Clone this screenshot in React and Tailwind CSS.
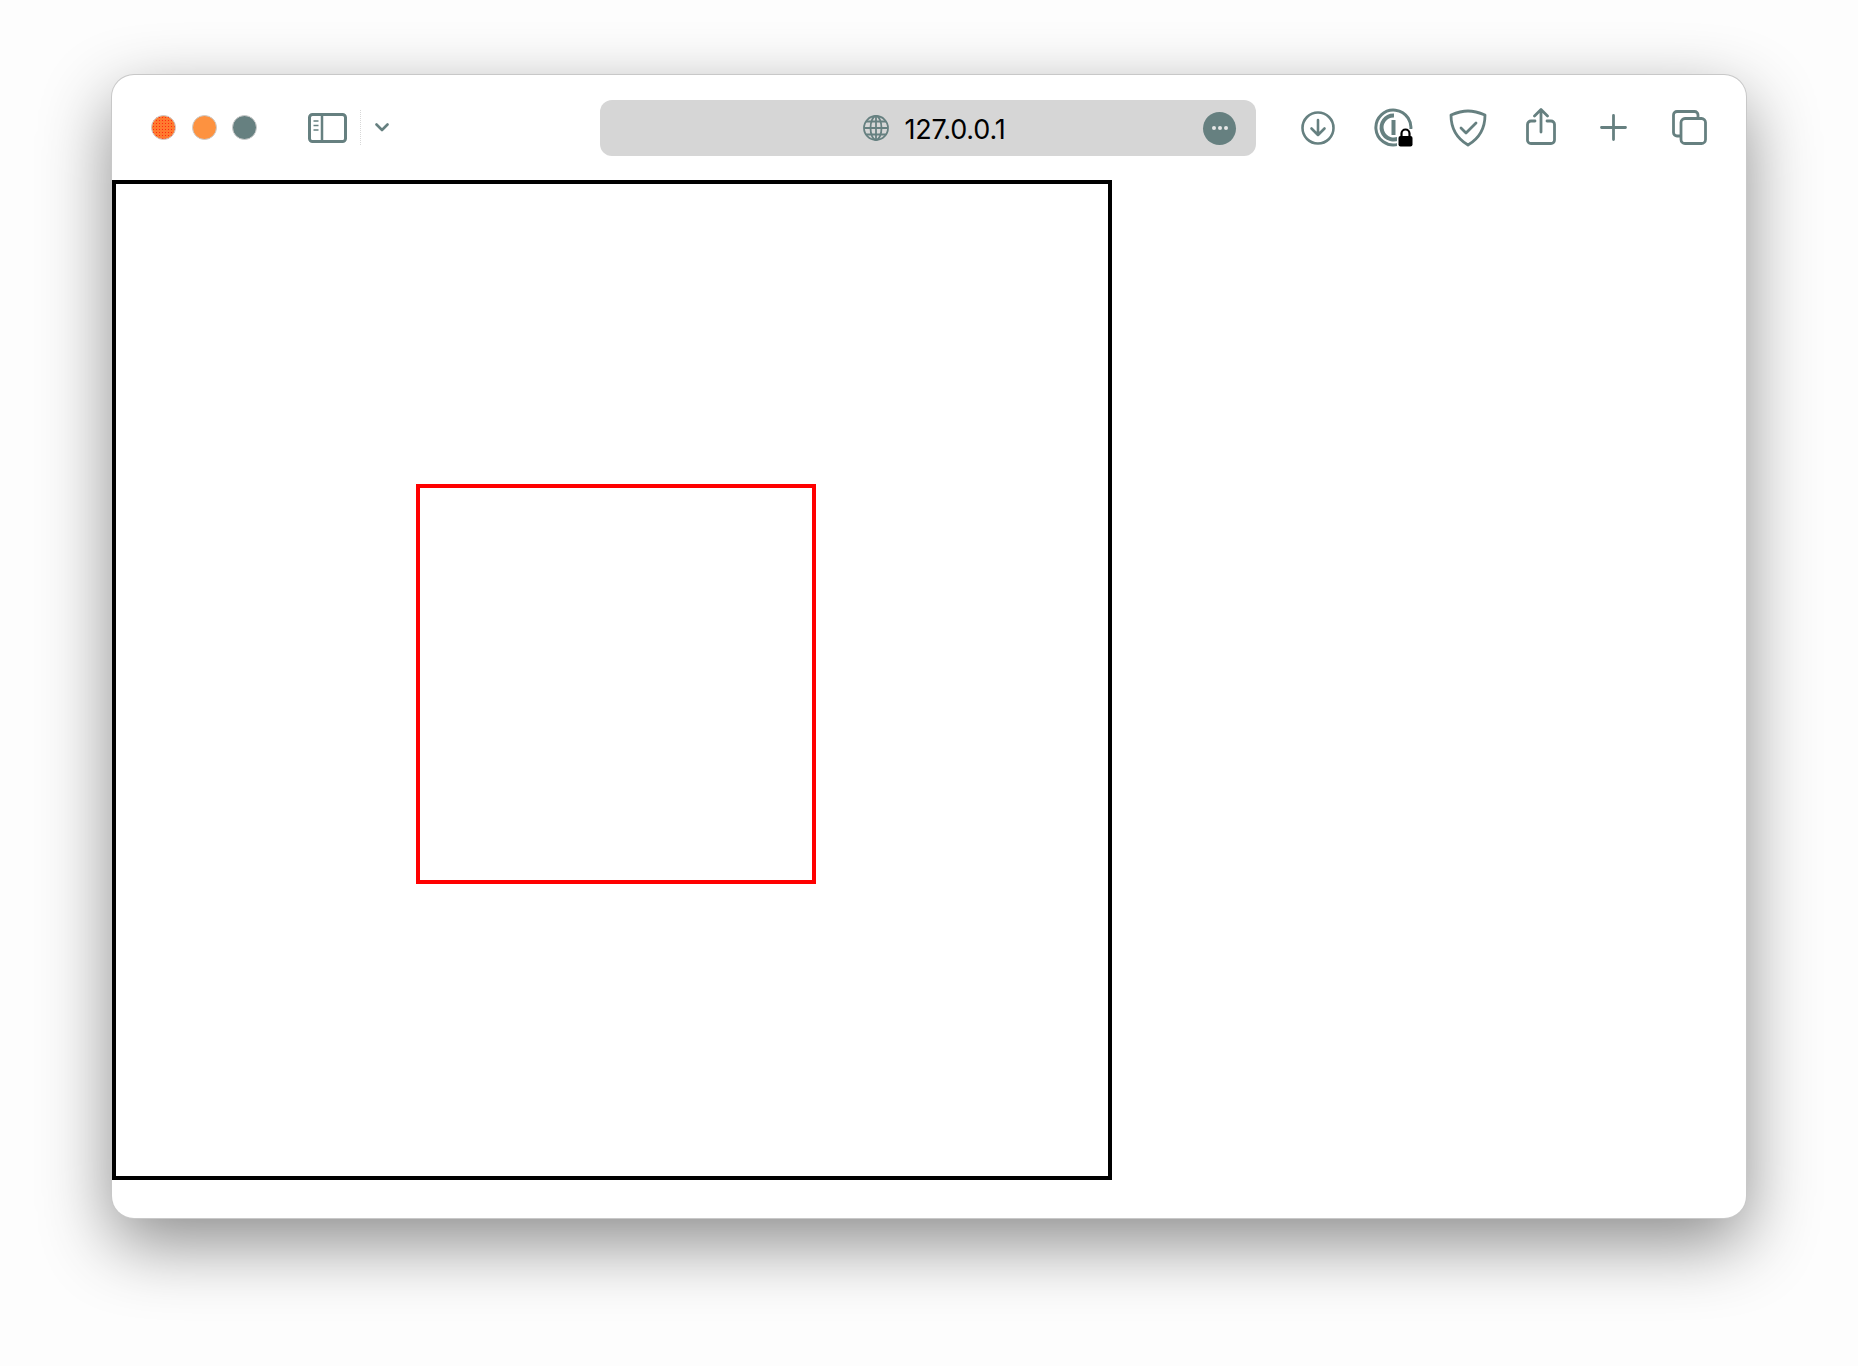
const slate = '#668080';

function SidebarIcon() {
  return (
    <svg width="39" height="30" viewBox="0 0 39 30" fill="none" stroke={slate}>
      <rect x="1.5" y="1.5" width="36" height="27" rx="3" strokeWidth="3" />
      <path d="M14 2v26" strokeWidth="2.5" />
      <path d="M5.5 8h5M5.5 12.5h5M5.5 17h5" strokeWidth="1.6" />
    </svg>
  );
}

function Chevron() {
  return (
    <svg width="14" height="9" viewBox="0 0 14 9" fill="none" stroke={slate} strokeWidth="2.6" strokeLinecap="round" strokeLinejoin="round">
      <path d="M1.5 1.5 7 7l5.500-5.500" />
    </svg>
  );
}

function GlobeIcon() {
  return (
    <svg width="26" height="26" viewBox="0 0 26 26" fill="none" stroke={slate} strokeWidth="1.8">
      <circle cx="13" cy="13" r="12" />
      <ellipse cx="13" cy="13" rx="5.5" ry="12" />
      <path d="M13 1v24M1 13h24M3 6.500h20M3 19.500h20" />
    </svg>
  );
}

function DownloadIcon() {
  return (
    <svg width="34" height="34" viewBox="0 0 34 34" fill="none" stroke={slate} strokeWidth="2.6" strokeLinecap="round" strokeLinejoin="round">
      <circle cx="17" cy="17" r="15.5" />
      <path d="M17 9v15M10.500 17.500 17 24l6.500-6.500" />
    </svg>
  );
}

function PasswordIcon() {
  return (
    <svg width="39" height="39" viewBox="0 0 39 39" fill="none" stroke={slate}>
      <path d="M36 25A17.500 17.500 0 1 0 24 36.400" strokeWidth="3" />
      <path d="M27.500 28.500A12 12 0 1 1 20 7.500" strokeWidth="4" />
      <path d="M19.500 12v15" strokeWidth="4" />
      <path d="M23 21h16v18H23z" fill="#fff" stroke="none" />
      <path d="M27.500 29v-3.500a4 4 0 0 1 8 0V29" stroke="#000" strokeWidth="2.2" />
      <rect x="24.500" y="28" width="14" height="10.500" rx="2" fill="#000" stroke="none" />
    </svg>
  );
}

function ShieldIcon() {
  return (
    <svg width="38" height="38" viewBox="0 0 38 38" fill="none" stroke={slate} strokeWidth="2.8" strokeLinecap="round" strokeLinejoin="round">
      <path d="M19 2c5 0 11 1.500 17 4 0 13-5 23-17 30C7 29 2 19 2 6c6-2.500 12-4 17-4Z" />
      <path d="m12 19 5 5 10-10" />
    </svg>
  );
}

function ShareIcon() {
  return (
    <svg width="30" height="37" viewBox="0 0 30 37" fill="none" stroke={slate} strokeWidth="2.8" strokeLinecap="round" strokeLinejoin="round">
      <path d="M9 13H5a3.500 3.500 0 0 0-3.500 3.500v15A3.500 3.500 0 0 0 5 35.500h20a3.500 3.500 0 0 0 3.500-3.500V16.500A3.500 3.500 0 0 0 25 13h-4" />
      <path d="M15 24V2M8.500 8 15 1.500 21.500 8" />
    </svg>
  );
}

function PlusIcon() {
  return (
    <svg width="27" height="27" viewBox="0 0 27 27" fill="none" stroke={slate} strokeWidth="2.8" strokeLinecap="round">
      <path d="M13.500 1.500v24M1.500 13.500h24" />
    </svg>
  );
}

function TabsIcon() {
  return (
    <svg width="35" height="35" viewBox="0 0 35 35" fill="none" stroke={slate} strokeWidth="2.8" strokeLinejoin="round">
      <path d="M8 26H5a3.500 3.500 0 0 1-3.500-3.500V5A3.500 3.500 0 0 1 5 1.500h17.500A3.500 3.500 0 0 1 26 5v3" />
      <rect x="9" y="8.500" width="24.500" height="25" rx="4" />
    </svg>
  );
}

function Toolbar() {
  return (
    <div className="flex h-[105px] items-center pl-[39px]">
      <div className="flex gap-[15.5px]">
        <span className="h-[25px] w-[25px] rounded-full border border-[#cccccc] bg-[#ff7a30] bg-[radial-gradient(#ff2a10_0.7px,transparent_1px)] bg-[length:3px_3px]" />
        <span className="h-[25px] w-[25px] rounded-full border border-[#cccccc] bg-[#fd9240]" />
        <span className="h-[25px] w-[25px] rounded-full border border-[#cccccc] bg-[#668080]" />
      </div>
      <div className="ml-[51px] flex items-center">
        <SidebarIcon />
      </div>
      <div className="ml-[13px] h-[35px] border-l border-dotted border-[#d8d8d8]" />
      <div className="ml-[14px] flex items-center">
        <Chevron />
      </div>
      <div className="relative ml-[211px] flex h-[56px] w-[656px] items-center justify-center gap-[16px] rounded-xl bg-[#d6d6d6] pl-[12px]">
        <GlobeIcon />
        <span className="mt-[3px] font-['Inter',sans-serif] text-[27px] leading-none tracking-[-0.2px] text-black">127.0.0.1</span>
        <span className="absolute right-[20px] top-[12px] flex h-[33px] w-[33px] items-center justify-center gap-[2px] rounded-full bg-[#668080]">
          <span className="h-[4px] w-[4px] rounded-full bg-[#e6e6e6]" />
          <span className="h-[4px] w-[4px] rounded-full bg-[#e6e6e6]" />
          <span className="h-[4px] w-[4px] rounded-full bg-[#e6e6e6]" />
        </span>
      </div>
      <div className="ml-[45px] flex items-center">
        <DownloadIcon />
      </div>
      <div className="ml-[39px] flex items-center">
        <PasswordIcon />
      </div>
      <div className="ml-[36px] flex items-center">
        <ShieldIcon />
      </div>
      <div className="ml-[39px] mb-[2px] flex items-center">
        <ShareIcon />
      </div>
      <div className="ml-[44px] flex items-center">
        <PlusIcon />
      </div>
      <div className="ml-[45px] flex items-center">
        <TabsIcon />
      </div>
    </div>
  );
}

export default function App() {
  return (
    <div className="h-[1366px] overflow-hidden bg-[#fdfdfd] pl-[112px] pt-[75px]">
      <div className="h-[1143px] w-[1634px] overflow-hidden rounded-[22px] bg-white shadow-[0_0_0_1px_#c8c8c8,0_25px_70px_0_rgba(0,0,0,0.45)]">
        <Toolbar />
        <div className="h-[1000px] w-[1000px] border-4 border-black pl-[300px] pt-[300px]">
          <div className="h-[400px] w-[400px] border-4 border-[#ff0000]" />
        </div>
      </div>
    </div>
  );
}
